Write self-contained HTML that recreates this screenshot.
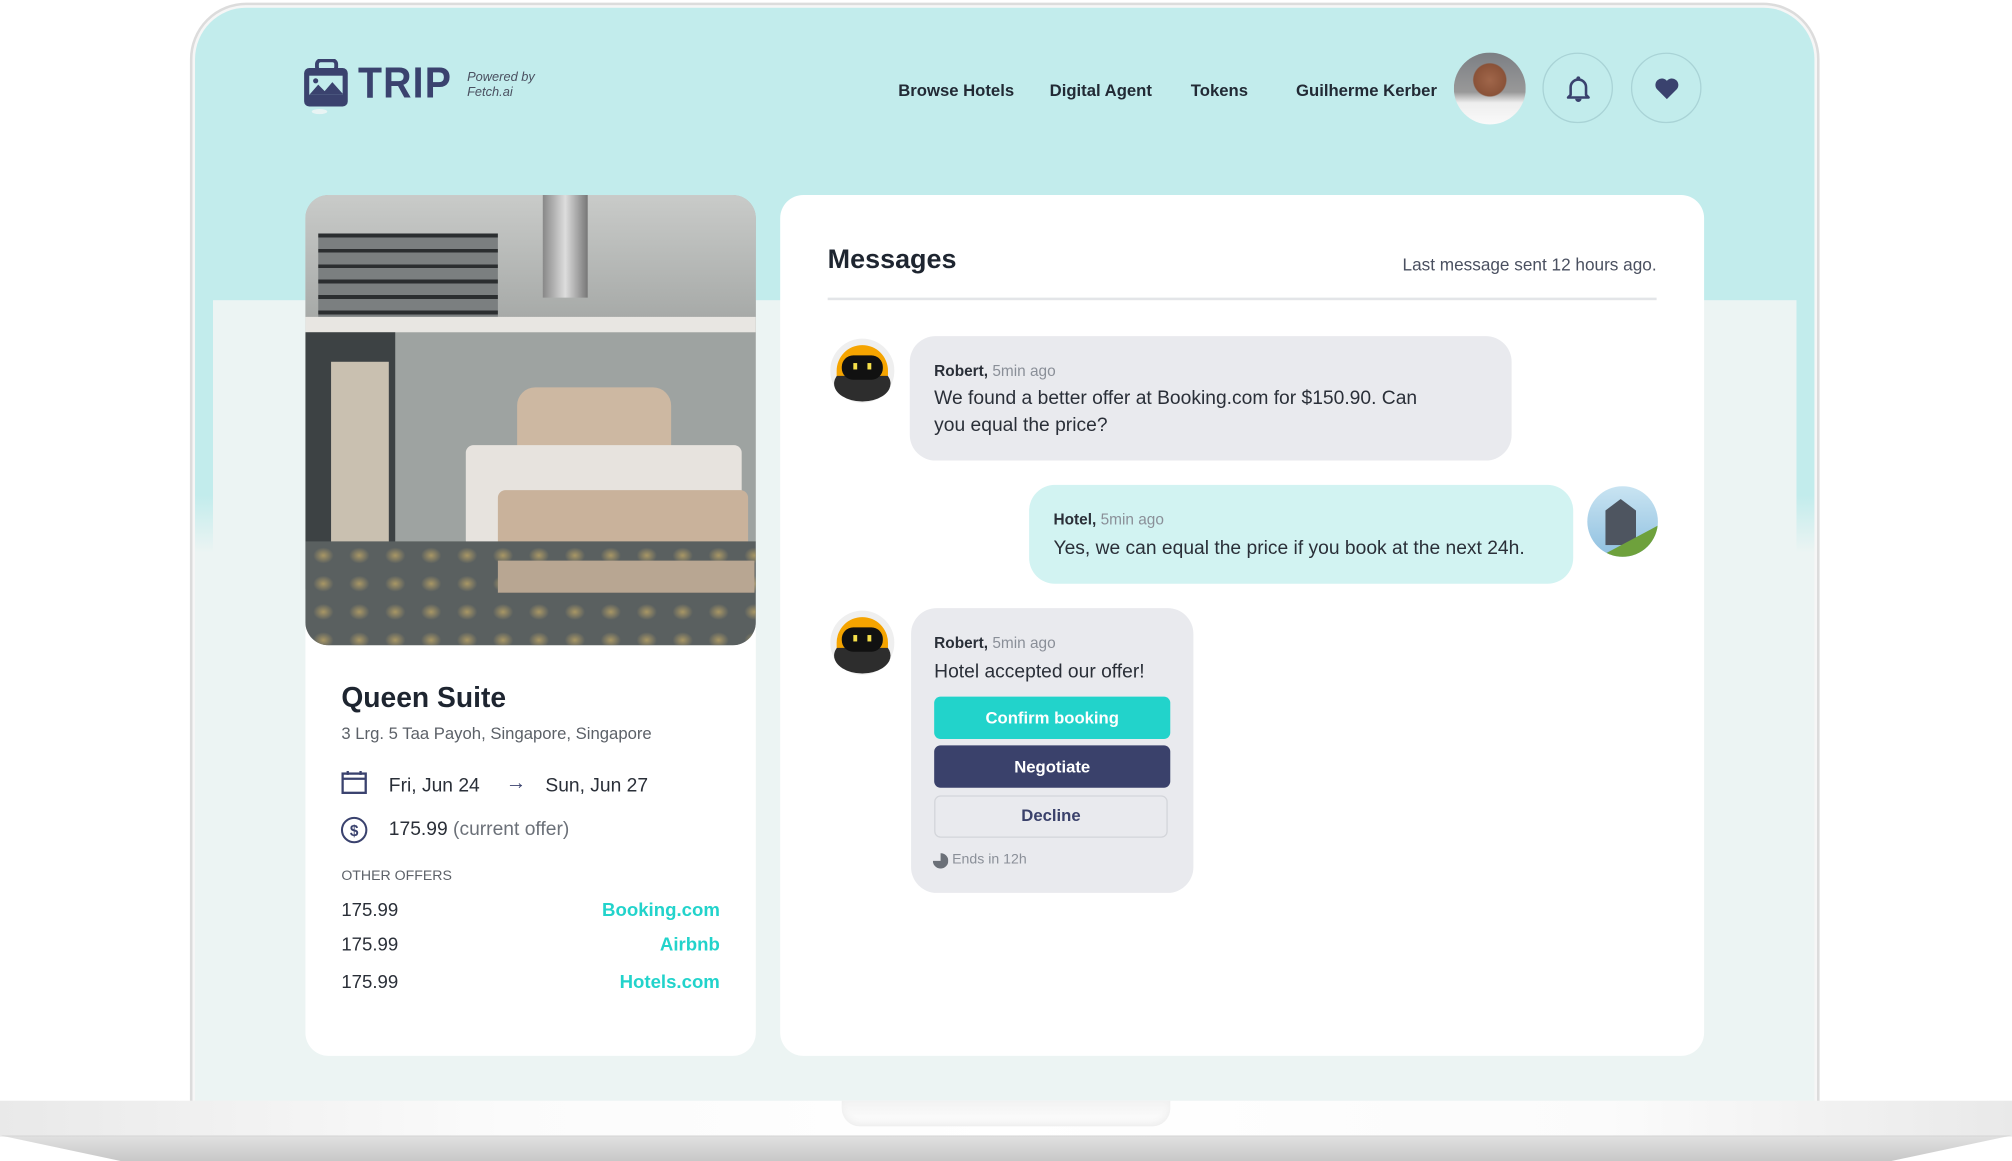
<!DOCTYPE html>
<html><head><meta charset="utf-8"><style>
*{margin:0;padding:0;box-sizing:border-box}
html,body{width:2012px;height:1161px;overflow:hidden;background:#fff;font-family:"Liberation Sans",sans-serif}
#w{position:absolute;left:0;top:0;width:1568px;height:905px;transform:scale(1.2832,1.2829);transform-origin:0 0}
.a{position:absolute}
.frame{left:148px;top:2px;width:1270px;height:900px;border:2px solid #dcdcdc;border-radius:44px 44px 0 0;background:#f6f6f6}
.screen{left:152px;top:6px;width:1262px;height:860px;border-radius:40px 40px 0 0;background:linear-gradient(#c2ecec 0,#c2ecec 380px,#ecf4f3 425px,#ecf4f3 100%)}
.light{left:166px;top:234px;width:1234px;height:640px;background:#ecf4f3}
.base{left:0;top:858px;width:1568px;height:28px;background:linear-gradient(90deg,#e9e9e9,#fbfbfb 25%,#fff 50%,#fbfbfb 80%,#e9e9e9)}
.base2{left:0;top:885px;width:1568px;height:20px;background:linear-gradient(#e0e0e0,#c8c8c8);clip-path:polygon(0 0,100% 0,94% 100%,6% 100%);border-top:1px solid #d4d4d4}
.notch{left:656px;top:858px;width:256px;height:20px;border-radius:0 0 14px 14px;background:linear-gradient(#f2f2f2,#fff);box-shadow:inset 0 -3px 5px #eee}
.nav{font-size:13px;font-weight:bold;color:#222a35;top:63px}
.circ{width:55px;height:55px;border-radius:50%;border:1.5px solid #a9d3d6}
.card{background:#fff;border-radius:18px}
.bub{border-radius:20px}
.meta{font-size:12px;color:#8a8f98}
.meta b{color:#2a2f38}
.msg{font-size:15px;color:#2a2f38;line-height:21px}
.btn{left:728px;width:184px;height:33px;border-radius:5px;font-size:13px;font-weight:bold;text-align:center;line-height:33px}
.off{font-size:14.5px;color:#2a2f38;left:266px}
.lnk{font-size:14.5px;color:#22d3cb;font-weight:bold;right:0}
</style></head><body><div id="w">
<div class="a frame"></div>
<div class="a screen"></div>
<div class="a light"></div>
<div class="a base"></div>
<div class="a base2"></div>
<div class="a notch"></div>

<svg class="a" style="left:236px;top:46px" width="38" height="44" viewBox="0 0 38 44">
<rect x="11" y="1" width="15" height="8" rx="3" fill="none" stroke="#3a426e" stroke-width="3"/>
<rect x="1" y="7" width="34" height="30" rx="4" fill="#3a426e"/>
<rect x="5" y="13" width="26" height="15" fill="#c2ecec"/>
<path d="M5 28 L12 20 L17 25 L23 18 L31 27 V28Z" fill="#3a426e"/>
<circle cx="10" cy="17" r="2" fill="#3a426e"/>
<ellipse cx="13" cy="41" rx="6" ry="2" fill="#e8f4f4"/>
</svg>
<div class="a" style="left:279px;top:46px;font-size:34px;font-weight:bold;color:#3a426e;letter-spacing:1px;transform:scaleX(.9);transform-origin:0 0">TRIP</div>
<div class="a" style="left:364px;top:55px;font-size:10px;font-style:italic;color:#4a5060;line-height:12px">Powered by<br>Fetch.ai</div>

<div class="a nav" style="left:700px">Browse Hotels</div>
<div class="a nav" style="left:818px">Digital Agent</div>
<div class="a nav" style="left:928px">Tokens</div>
<div class="a nav" style="left:1010px">Guilherme Kerber</div>
<div class="a" style="left:1133px;top:41px;width:56px;height:56px;border-radius:50%;background:radial-gradient(circle at 50% 38%,#a0664a 0,#8a5238 28%,transparent 30%),linear-gradient(#7c7f84 0,#999 55%,#eee 70%,#fafafa 100%)"></div>
<div class="a circ" style="left:1202px;top:41px"></div>
<svg class="a" style="left:1218px;top:57px" width="24" height="24" viewBox="0 0 24 24"><path d="M6 17V11a6 6 0 0 1 12 0v6l2 2H4z" fill="none" stroke="#3a426e" stroke-width="2" stroke-linejoin="round"/><circle cx="12" cy="4" r="1.5" fill="#3a426e"/><path d="M9.5 20a2.5 2.5 0 0 0 5 0z" fill="#3a426e"/></svg>
<div class="a circ" style="left:1271px;top:41px"></div>
<svg class="a" style="left:1288px;top:58px" width="22" height="22" viewBox="0 0 24 24"><path d="M12 21 3.5 12.5A5 5 0 0 1 12 5.5a5 5 0 0 1 8.5 7z" fill="#3a426e"/></svg>

<div class="a card" style="left:238px;top:152px;width:351px;height:671px"></div>
<div class="a" style="left:238px;top:152px;width:351px;height:351px;border-radius:18px;overflow:hidden;background:#9ea3a1">
 <div class="a" style="left:0;top:0;width:351px;height:95px;background:linear-gradient(#c9cbc9,#a7aaa8)"></div>
 <div class="a" style="left:10px;top:30px;width:140px;height:65px;background:repeating-linear-gradient(#2b2e30 0 3px,#7b7f80 3px 12px)"></div>
 <div class="a" style="left:185px;top:0;width:35px;height:80px;background:linear-gradient(90deg,#888,#ddd,#777)"></div>
 <div class="a" style="left:0;top:95px;width:351px;height:12px;background:#e8e6e2"></div>
 <div class="a" style="left:0;top:107px;width:70px;height:200px;background:#3d4244"></div>
 <div class="a" style="left:20px;top:130px;width:45px;height:150px;background:#c9c0b0"></div>
 <div class="a" style="left:165px;top:150px;width:120px;height:70px;border-radius:14px 14px 0 0;background:#cdb8a2"></div>
 <div class="a" style="left:125px;top:195px;width:215px;height:80px;background:#e7e3de;border-radius:6px"></div>
 <div class="a" style="left:150px;top:230px;width:195px;height:60px;background:#c9b29b;border-radius:6px"></div>
 <div class="a" style="left:0;top:270px;width:351px;height:81px;background:radial-gradient(#a99765 0,transparent 40%) 0 0/28px 22px,#5a6060"></div>
 <div class="a" style="left:150px;top:285px;width:200px;height:25px;background:#b8a692"></div>
</div>
<div class="a" style="left:266px;top:531px;font-size:22px;font-weight:bold;color:#1e2530">Queen Suite</div>
<div class="a" style="left:266px;top:564px;font-size:13px;color:#5c6168">3 Lrg. 5 Taa Payoh, Singapore, Singapore</div>
<svg class="a" style="left:266px;top:600px" width="22" height="22" viewBox="0 0 22 22"><rect x="1" y="3" width="18" height="15" fill="none" stroke="#3a426e" stroke-width="1.8"/><path d="M1 7h18M5 1v3M15 1v3" stroke="#3a426e" stroke-width="1.8"/></svg>
<div class="a" style="left:303px;top:604px;font-size:15px;color:#2a2f38">Fri, Jun 24</div>
<div class="a" style="left:394px;top:602px;font-size:16px;color:#3a426e;font-weight:bold">→</div>
<div class="a" style="left:425px;top:604px;font-size:15px;color:#2a2f38">Sun, Jun 27</div>
<svg class="a" style="left:265px;top:636px" width="22" height="22" viewBox="0 0 22 22"><circle cx="11" cy="11" r="9.5" fill="none" stroke="#3a426e" stroke-width="1.6"/><text x="11" y="15.5" text-anchor="middle" font-size="12" font-weight="bold" fill="#3a426e" font-family="Liberation Sans">$</text></svg>
<div class="a" style="left:303px;top:638px;font-size:15px;color:#2a2f38">175.99 <span style="color:#6b7078">(current offer)</span></div>
<div class="a" style="left:266px;top:677px;font-size:11px;color:#5c6168">OTHER OFFERS</div>
<div class="a off" style="top:702px">175.99</div>
<div class="a off" style="top:729px">175.99</div>
<div class="a off" style="top:758px">175.99</div>
<div class="a" style="left:400px;top:702px;width:161px;height:80px">
<div class="a lnk" style="top:0">Booking.com</div>
<div class="a lnk" style="top:27px">Airbnb</div>
<div class="a lnk" style="top:56px">Hotels.com</div>
</div>

<div class="a card" style="left:608px;top:152px;width:720px;height:671px"></div>
<div class="a" style="left:645px;top:191px;font-size:21px;font-weight:bold;color:#1e2530">Messages</div>
<div class="a" style="right:277px;top:199px;font-size:13.4px;color:#4a5060">Last message sent 12 hours ago.</div>
<div class="a" style="left:645px;top:232px;width:646px;height:2px;background:#e3e5e8"></div>

<svg class="a" style="left:647px;top:263px" width="50" height="52" viewBox="0 0 50 52"><circle cx="25" cy="26" r="25" fill="#efefef"/><ellipse cx="25" cy="36" rx="22" ry="14" fill="#2d2d2d"/><path d="M5 26a20 20 0 0 1 40 0v4H5z" fill="#f5a400"/><rect x="9" y="14" width="32" height="19" rx="9" fill="#111"/><rect x="18" y="20" width="3" height="5" fill="#f6e04a"/><rect x="29" y="20" width="3" height="5" fill="#f6e04a"/></svg>
<div class="a bub" style="left:709px;top:262px;width:469px;height:97px;background:#e9eaee"></div>
<div class="a meta" style="left:728px;top:282px"><b>Robert,</b> 5min ago</div>
<div class="a msg" style="left:728px;top:300px">We found a better offer at Booking.com for $150.90. Can<br>you equal the price?</div>

<div class="a bub" style="left:802px;top:378px;width:424px;height:77px;background:#d2f3f2"></div>
<div class="a meta" style="left:821px;top:398px"><b>Hotel,</b> 5min ago</div>
<div class="a msg" style="left:821px;top:417px">Yes, we can equal the price if you book at the next 24h.</div>
<div class="a" style="left:1237px;top:379px;width:55px;height:55px;border-radius:50%;overflow:hidden;background:linear-gradient(#c9e4f2,#8fc0e0)">
 <div class="a" style="left:14px;top:10px;width:24px;height:36px;background:#4e5560;clip-path:polygon(50% 0,100% 25%,100% 100%,0 100%,0 25%)"></div>
 <div class="a" style="left:0;top:28px;width:60px;height:40px;background:#6ea13c;clip-path:polygon(100% 0,100% 100%,0 100%,0 80%)"></div>
</div>

<svg class="a" style="left:647px;top:475px" width="50" height="52" viewBox="0 0 50 52"><circle cx="25" cy="26" r="25" fill="#efefef"/><ellipse cx="25" cy="36" rx="22" ry="14" fill="#2d2d2d"/><path d="M5 26a20 20 0 0 1 40 0v4H5z" fill="#f5a400"/><rect x="9" y="14" width="32" height="19" rx="9" fill="#111"/><rect x="18" y="20" width="3" height="5" fill="#f6e04a"/><rect x="29" y="20" width="3" height="5" fill="#f6e04a"/></svg>
<div class="a bub" style="left:710px;top:474px;width:220px;height:222px;background:#e9eaee"></div>
<div class="a meta" style="left:728px;top:494px"><b>Robert,</b> 5min ago</div>
<div class="a msg" style="left:728px;top:513px">Hotel accepted our offer!</div>
<div class="a btn" style="top:543px;background:#22d3cb;color:#fff">Confirm booking</div>
<div class="a btn" style="top:581px;background:#3a416b;color:#fff">Negotiate</div>
<div class="a btn" style="top:620px;width:182px;border:1.5px solid #d3d5da;color:#3a416b;line-height:30px">Decline</div>
<svg class="a" style="left:727px;top:665px" width="12" height="12" viewBox="0 0 12 12"><path d="M6 0a6 6 0 1 1-6 6h6z" fill="#6b7078"/></svg>
<div class="a" style="left:742px;top:664px;font-size:11px;color:#8a8f98">Ends in 12h</div>
</div></body></html>
